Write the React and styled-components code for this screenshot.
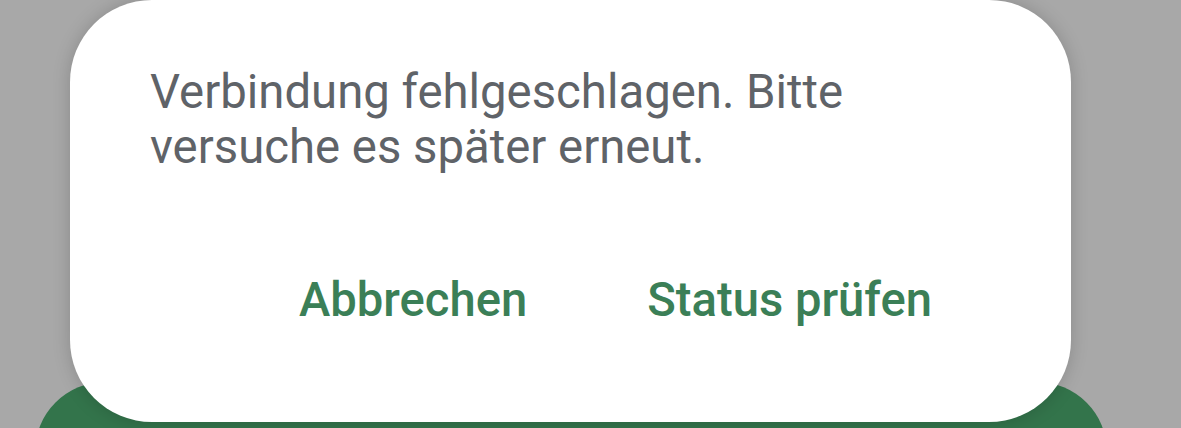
import React from 'react'
import styled, { createGlobalStyle } from 'styled-components'

const GlobalStyle = createGlobalStyle`
html, body {
    margin: 0;
    padding: 0;
    background-color: #a8a8a8;
}
`

const Screen = styled.div`
position: relative;
width: 1181px;
height: 428px;
overflow: hidden;
background-color: #a8a8a8;
`

// green button of the page, sitting behind the dialog
const BackdropButton = styled.div`
position: absolute;
left: 35px;
top: 382px;
width: 1072px;
height: 140px;
border-radius: 72px;
background-color: #33744b;
`

const Dialog = styled.div`
position: relative;
box-sizing: border-box;
margin-left: 70px;
width: 1001px;
height: 422px;
padding: 65px 80px 0 80px;
background-color: #ffffff;
border-radius: 82px;
box-shadow: 0 0 18px rgba(0, 0, 0, 0.18);
display: flex;
flex-direction: column;
`

const Message = styled.p`
margin: 0;
font-family: Roboto, "Liberation Sans", sans-serif;
font-size: 47.3px;
line-height: 55px;
color: #5f6368;
`

const Actions = styled.div`
display: flex;
justify-content: flex-end;
gap: 120px;
margin-top: 98px;
padding-right: 59px;
`

const ActionButton = styled.button`
border: none;
background: transparent;
padding: 0;
font-family: Roboto, "Liberation Sans", sans-serif;
font-weight: 500;
font-size: 47.2px;
line-height: 55px;
color: #3b7f57;
cursor: pointer;
`

const App = () => {
    return (
        <Screen>
            <GlobalStyle />
            <BackdropButton />
            <Dialog>
                <Message>
                    Verbindung fehlgeschlagen. Bitte<br />versuche es später erneut.
                </Message>
                <Actions>
                    <ActionButton>Abbrechen</ActionButton>
                    <ActionButton>Status prüfen</ActionButton>
                </Actions>
            </Dialog>
        </Screen>
    )
}

export default App
